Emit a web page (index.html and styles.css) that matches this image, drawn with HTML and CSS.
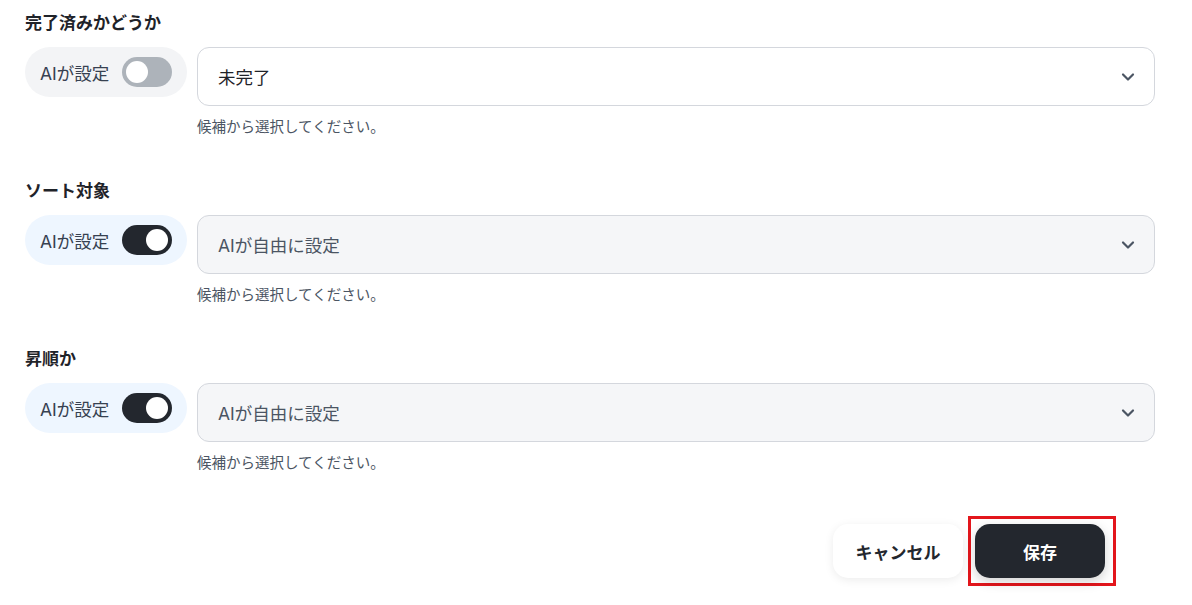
FILE: index.html
```html
<!DOCTYPE html>
<html lang="ja">
<head>
<meta charset="utf-8">
<link rel="stylesheet" href="styles.css">
</head>
<body>
<div class="form">
  <section class="field">
    <div class="label">完了済みかどうか</div>
    <div class="row">
      <div class="ai-pill off">
        <span>AIが設定</span>
        <span class="toggle"><span class="knob"></span></span>
      </div>
      <div class="select">
        <span class="value">未完了</span>
        <svg class="chev" width="14" height="14" viewBox="0 0 14 14"><path d="M2 4.5 L7 9.5 L12 4.5" fill="none" stroke="#4b5563" stroke-width="2.2" stroke-linecap="round" stroke-linejoin="round"/></svg>
      </div>
    </div>
    <div class="hint">候補から選択してください。</div>
  </section>
  <section class="field">
    <div class="label">ソート対象</div>
    <div class="row">
      <div class="ai-pill on">
        <span>AIが設定</span>
        <span class="toggle"><span class="knob"></span></span>
      </div>
      <div class="select disabled">
        <span class="value">AIが自由に設定</span>
        <svg class="chev" width="14" height="14" viewBox="0 0 14 14"><path d="M2 4.5 L7 9.5 L12 4.5" fill="none" stroke="#4b5563" stroke-width="2.2" stroke-linecap="round" stroke-linejoin="round"/></svg>
      </div>
    </div>
    <div class="hint">候補から選択してください。</div>
  </section>
  <section class="field">
    <div class="label">昇順か</div>
    <div class="row">
      <div class="ai-pill on">
        <span>AIが設定</span>
        <span class="toggle"><span class="knob"></span></span>
      </div>
      <div class="select disabled">
        <span class="value">AIが自由に設定</span>
        <svg class="chev" width="14" height="14" viewBox="0 0 14 14"><path d="M2 4.5 L7 9.5 L12 4.5" fill="none" stroke="#4b5563" stroke-width="2.2" stroke-linecap="round" stroke-linejoin="round"/></svg>
      </div>
    </div>
    <div class="hint">候補から選択してください。</div>
  </section>
  <div class="actions">
    <button class="btn cancel">キャンセル</button>
    <div class="highlight"><button class="btn save">保存</button></div>
  </div>
</div>
</body>
</html>
```
FILE: styles.css
```css
* { box-sizing: border-box; }
html, body { margin: 0; padding: 0; background: #fff; }
body {
  font-family: Inter, "Noto Sans CJK JP", sans-serif;
  color: #1f2937;
  width: 1192px;
  height: 605px;
  overflow: hidden;
}
.form {
  padding: 12px 37px 0 25px;
}
.field {
  margin-bottom: 44px;
}
.label {
  font-size: 17px;
  font-weight: 700;
  line-height: 22px;
  color: #1f2329;
  margin-bottom: 13px;
}
.row {
  display: flex;
  align-items: flex-start;
  gap: 10px;
}
.ai-pill {
  width: 162px;
  height: 50px;
  border-radius: 25px;
  display: flex;
  align-items: center;
  justify-content: space-between;
  padding: 0 15px;
  font-size: 17.5px;
  color: #374151;
  flex: none;
}
.ai-pill.off { background: #f3f4f6; }
.ai-pill.on { background: #eef6ff; }
.toggle {
  width: 50px;
  height: 30px;
  border-radius: 15px;
  display: flex;
  align-items: center;
  padding: 0 4px;
}
.off .toggle { background: #adb3ba; justify-content: flex-start; }
.on .toggle { background: #23272e; justify-content: flex-end; }
.knob {
  width: 22px;
  height: 22px;
  border-radius: 50%;
  background: #fff;
}
.select {
  flex: 1;
  height: 59px;
  border: 1px solid #d4d7dd;
  border-radius: 12px;
  background: #fff;
  display: flex;
  align-items: center;
  justify-content: space-between;
  padding: 0 19px 0 20px;
  font-size: 17.5px;
  color: #1f2329;
}
.select.disabled {
  background: #f5f6f8;
  color: #4b5563;
}
.hint {
  margin-left: 172px;
  margin-top: 12px;
  font-size: 14.5px;
  line-height: 18px;
  color: #4b5563;
}
.actions {
  display: flex;
  justify-content: flex-end;
  align-items: center;
  gap: 5px;
  margin-top: 0;
  padding-right: 39px;
}
.btn {
  font-family: Inter, "Noto Sans CJK JP", sans-serif;
  font-size: 17px;
  font-weight: 700;
  border: none;
  height: 54px;
  width: 130px;
  border-radius: 15px;
  cursor: pointer;
}
.cancel {
  background: #fff;
  color: #23272e;
  box-shadow: 0 2px 10px rgba(0,0,0,0.08);
}
.highlight {
  border: 3px solid #e3161c;
  padding: 5px 8px 5px 4px;
}
.save {
  background: #23272e;
  color: #fff;
  box-shadow: 0 4px 12px rgba(0,0,0,0.18);
  display: block;
}
```
